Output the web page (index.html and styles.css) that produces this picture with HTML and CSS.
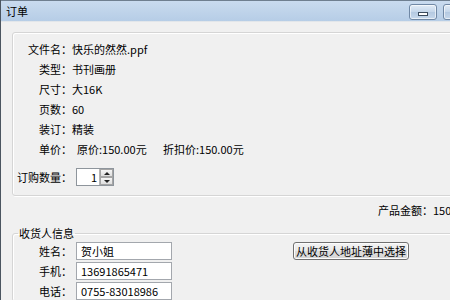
FILE: index.html
```html
<!DOCTYPE html>
<html lang="zh-CN">
<head>
    <meta charset="UTF-8">
    <title>订单</title>
    <link rel="stylesheet" href="styles.css">
</head>
<body>
    <div class="window">
        <div class="titlebar">
            <span class="title">订单</span>
            <div class="tb-btns">
                <span class="tb-btn"><i class="min-icon"></i></span>
                <span class="tb-btn"></span>
            </div>
        </div>

        <div class="client">
            <div class="group info">
                <div class="row"><span class="lbl">文件名：</span><span>快乐的然然.ppf</span></div>
                <div class="row"><span class="lbl">类型：</span><span>书刊画册</span></div>
                <div class="row"><span class="lbl">尺寸：</span><span>大16K</span></div>
                <div class="row"><span class="lbl">页数：</span><span>60</span></div>
                <div class="row"><span class="lbl">装订：</span><span>精装</span></div>
                <div class="row"><span class="lbl">单价：</span><span class="price">原价:150.00元</span><span>折扣价:150.00元</span></div>
                <div class="row qty-row">
                    <span class="lbl">订购数量：</span>
                    <div class="spinner">
                        <span class="spin-val">1</span>
                        <div class="spin-btns">
                            <span class="spin-up"></span>
                            <span class="spin-down"></span>
                        </div>
                    </div>
                </div>
            </div>

            <div class="total">产品金额：150.00元</div>

            <fieldset class="group receiver">
                <legend>收货人信息</legend>
                <div class="row">
                    <span class="lbl">姓名：</span>
                    <span class="field">贺小姐</span>
                    <button class="btn">从收货人地址薄中选择</button>
                </div>
                <div class="row">
                    <span class="lbl">手机：</span>
                    <span class="field">13691865471</span>
                </div>
                <div class="row">
                    <span class="lbl">电话：</span>
                    <span class="field">0755-83018986</span>
                </div>
            </fieldset>
        </div>
    </div>
</body>
</html>
```

FILE: styles.css
```css
body {
    margin: 0;
    width: 450px;
    height: 300px;
    overflow: hidden;
    background-color: #f0f0f0;
    font-family: "Noto Sans CJK SC", "Liberation Sans", sans-serif;
    font-size: 11px;
    color: #000;
}
.window {
    height: 300px;
    border-left: 1px solid #4b5560;
    overflow: hidden;
}
.titlebar {
    height: 22px;
    display: flex;
    background: linear-gradient(#c9dbef, #b6cde6);
    border-top: 1px solid #6f7f90;
    box-sizing: border-box;
    border-bottom: 1px solid #e2e6ea;
}
.title {
    flex: 1;
    padding-left: 5px;
    line-height: 21px;
}
.tb-btns {
    width: 41px;
    display: flex;
    gap: 6px;
    overflow: hidden;
    padding-top: 3px;
}
.tb-btn {
    flex-shrink: 0;
    width: 26px;
    height: 14px;
    border: 1px solid #7088a5;
    border-radius: 3px;
    background: linear-gradient(#e2ecf7, #c4d6ea 50%, #b4c9e1 51%, #c6d8ec);
    box-shadow: inset 0 0 0 1px rgba(255, 255, 255, 0.6);
    position: relative;
}
.min-icon {
    position: absolute;
    left: 8px;
    top: 7px;
    width: 8px;
    height: 2px;
    background: #fff;
    border: 1px solid #3a4a5c;
}
.client {
    padding: 10px 0 0 11px;
}
.group {
    border: 1px solid #d5d5d5;
    border-radius: 3px;
    box-shadow: inset 1px 1px 0 #fff, 1px 1px 0 #fff;
}
.info {
    margin-right: -20px;
    padding: 6px 0 9px 0;
}
.row {
    display: flex;
    align-items: center;
    height: 20px;
    white-space: nowrap;
}
.lbl {
    width: 59px;
    flex-shrink: 0;
    text-align: right;
}
.price {
    margin-left: 5px;
    width: 86px;
}
.qty-row {
    margin-top: 8px;
    height: 19px;
}
.spinner {
    margin-left: 4px;
    width: 36px;
    height: 16px;
    border: 1px solid #8e959c;
    background: #fff;
    display: flex;
}
.spin-val {
    flex: 1;
    text-align: right;
    padding-right: 2px;
    line-height: 16px;
}
.spin-btns {
    width: 13px;
    display: flex;
    flex-direction: column;
    border-left: 1px solid #b5b5b5;
}
.spin-up, .spin-down {
    flex: 1;
    background: linear-gradient(#f6f6f6, #dedede);
    border: 1px solid #a5a5a5;
    box-sizing: border-box;
    position: relative;
}
.spin-up::after, .spin-down::after {
    content: "";
    position: absolute;
    left: 3px;
    top: 2px;
    border-left: 3px solid transparent;
    border-right: 3px solid transparent;
}
.spin-up::after {
    border-bottom: 3px solid #222;
}
.spin-down::after {
    border-top: 3px solid #222;
}
.total {
    margin-top: 4px;
    height: 20px;
    line-height: 20px;
    padding-left: 366px;
    white-space: nowrap;
}
.receiver {
    margin: 6px -20px 0 0;
    padding: 1px 0 0 0;
    min-width: 0;
}
.receiver legend {
    margin-left: 5px;
    padding: 0 1px;
    line-height: 14px;
}
.field {
    margin-left: 4px;
    width: 90px;
    height: 16px;
    line-height: 16px;
    padding-left: 4px;
    border: 1px solid #a3a7ad;
    background: #fff;
}
.btn {
    margin-left: 121px;
    width: 116px;
    height: 18px;
    padding: 0;
    font-family: inherit;
    font-size: 11px;
    color: #000;
    border: 1px solid #707070;
    border-radius: 3px;
    background: linear-gradient(#f4f4f4, #e8e8e8 50%, #dcdcdc 51%, #d6d6d6);
    box-shadow: inset 0 0 0 1px #fcfcfc;
}
```
